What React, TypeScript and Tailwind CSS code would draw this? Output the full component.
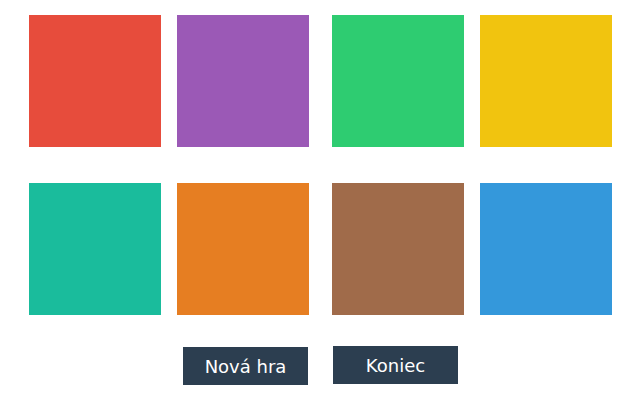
export default function App() {
  const rows = [
    ["#e74c3c", "#9b59b6", "#2ecc71", "#f1c40f"],
    ["#1abc9c", "#e67e22", "#a06b4a", "#3498db"],
  ];
  return (
    <div className="w-[640px] h-[400px] bg-white pt-[15px]" style={{ fontFamily: '"DejaVu Sans", sans-serif' }}>
      <div className="flex flex-col gap-[36px]">
        {rows.map((r, i) => (
          <div key={i} className="flex justify-center pl-[1px]">
            <div className="flex gap-[16px]">
              <div className="w-[132px] h-[132px]" style={{ background: r[0] }} />
              <div className="w-[132px] h-[132px]" style={{ background: r[1] }} />
            </div>
            <div className="flex gap-[16px] ml-[23px]">
              <div className="w-[132px] h-[132px]" style={{ background: r[2] }} />
              <div className="w-[132px] h-[132px]" style={{ background: r[3] }} />
            </div>
          </div>
        ))}
      </div>
      <div className="flex justify-center items-start gap-[25px] mt-[31px] pl-[1px]">
        <button className="w-[125px] h-[38px] bg-[#2c3e50] text-white text-[18px] mt-[1px] flex items-center justify-center">
          Nová hra
        </button>
        <button className="w-[125px] h-[38px] bg-[#2c3e50] text-white text-[18px] flex items-center justify-center">
          Koniec
        </button>
      </div>
    </div>
  );
}
